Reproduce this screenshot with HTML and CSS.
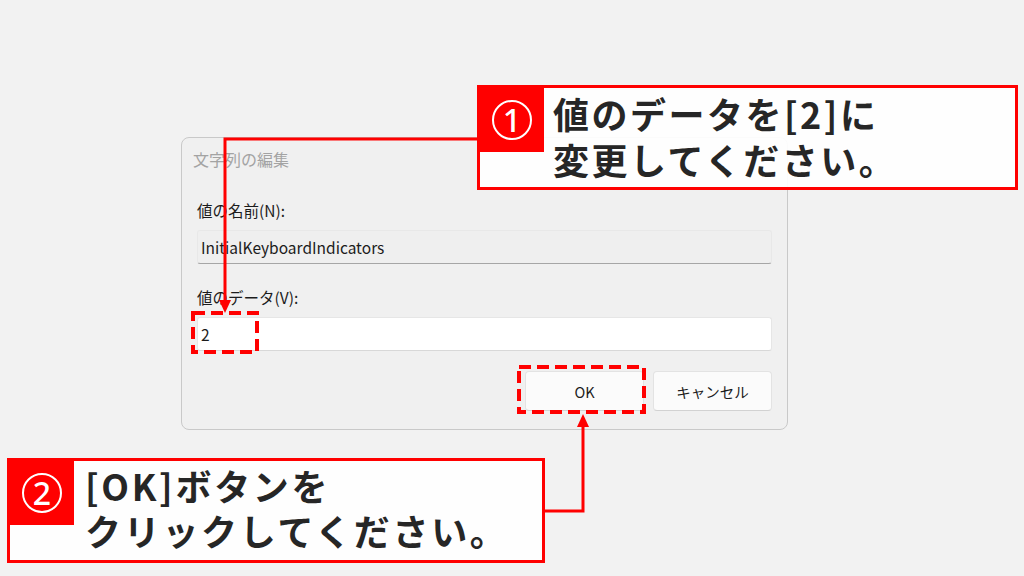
FILE: index.html
```html
<!DOCTYPE html>
<html lang="ja">
  <head>
    <meta charset="utf-8">
    <title>文字列の編集</title>
    <link rel="stylesheet" href="styles.css">
  </head>
  <body>
    <div class="stage">
      <div class="dialog">
        <div class="dialog-title">文字列の編集</div>
        <div class="dialog-body">
          <div class="field-label">値の名前(N):</div>
          <div class="field field-readonly">InitialKeyboardIndicators</div>
          <div class="field-label second">値のデータ(V):</div>
          <div class="field field-edit">2</div>
          <div class="buttons">
            <button class="btn">OK</button>
            <button class="btn">キャンセル</button>
          </div>
        </div>
      </div>

      <svg class="marks" width="1024" height="576" viewBox="0 0 1024 576">
        <!-- dashed highlights -->
        <rect class="dash" x="193" y="313" width="64" height="39"/>
        <rect class="dash" x="519" y="367" width="125" height="45"/>
        <!-- arrow to value field -->
        <polyline class="line" points="480,139 225,139 225,302"/>
        <polygon class="head" points="219,300 231,300 225,313"/>
        <!-- arrow to OK button -->
        <polyline class="line" points="543,511 583,511 583,425"/>
        <polygon class="head" points="577,427 589,427 583,414"/>
      </svg>

      <div class="callout callout-1">
        <div class="num"><span class="circle">1</span></div>
        <div class="callout-text">値のデータを[2]に<br>変更してください。</div>
      </div>

      <div class="callout callout-2">
        <div class="num"><span class="circle">2</span></div>
        <div class="callout-text">[OK]ボタンを<br>クリックしてください。</div>
      </div>
    </div>
  </body>
</html>
```

FILE: styles.css
```css
body {
  margin: 0;
  background: #f2f2f2;
  font-family: "Noto Sans CJK JP", "Noto Sans", sans-serif;
}

.stage {
  position: relative;
  width: 1024px;
  height: 576px;
  overflow: hidden;
  padding: 137px 0 0 181px;
  box-sizing: border-box;
}

/* ダイアログ */
.dialog {
  width: 607px;
  height: 293px;
  box-sizing: border-box;
  background: #f0f0f0;
  border: 1px solid #c9c9c9;
  border-radius: 8px;
}

.dialog-title {
  height: 42px;
  line-height: 42px;
  padding-left: 11px;
  font-size: 16px;
  color: #a3a3a3;
}

.dialog-body {
  padding: 20px 15px 0 15px;
}

.field-label {
  height: 20px;
  line-height: 20px;
  font-size: 15.5px;
  color: #1c1c1c;
}

.field-label.second {
  margin-top: 23px;
}

.field {
  margin-top: 10px;
  height: 34px;
  line-height: 32px;
  box-sizing: border-box;
  padding-left: 3px;
  font-size: 15.5px;
  color: #1c1c1c;
  border-radius: 3px;
}

.field-readonly {
  background: #efefef;
  border: 1px solid #e8e8e8;
  border-bottom-color: #a6a6a6;
}

.field-edit {
  background: #ffffff;
  border: 1px solid #e6e6e6;
  border-bottom-color: #d8d8d8;
}

.buttons {
  margin-top: 20px;
  display: flex;
  justify-content: flex-end;
  gap: 9px;
}

.btn {
  width: 119px;
  height: 40px;
  background: #fbfbfb;
  border: 1px solid #e3e3e3;
  border-bottom-color: #d2d2d2;
  border-radius: 4px;
  font-family: inherit;
  font-size: 14.5px;
  color: #1c1c1c;
}

/* 注釈 */
.marks {
  position: absolute;
  left: 0;
  top: 0;
}

.marks .dash {
  fill: none;
  stroke: #ff0000;
  stroke-width: 4;
  stroke-dasharray: 12 6;
}

.marks .line {
  fill: none;
  stroke: #ff0000;
  stroke-width: 3;
}

.marks .head {
  fill: #ff0000;
}

.callout {
  position: absolute;
  height: 105px;
  box-sizing: border-box;
  border: 3px solid #ff0000;
  background: rgba(255, 255, 255, 0.93);
  display: flex;
  align-items: flex-start;
}

.callout-1 {
  left: 477px;
  top: 85px;
  width: 541px;
}

.callout-2 {
  left: 7px;
  top: 458px;
  width: 538px;
}

.num {
  width: 64px;
  height: 64px;
  flex: none;
  background: #ff0000;
  display: flex;
  align-items: center;
  justify-content: center;
}

.circle {
  width: 40px;
  height: 40px;
  box-sizing: border-box;
  border: 2px solid #ffffff;
  border-radius: 50%;
  color: #ffffff;
  font-family: "Noto Sans", sans-serif;
  font-size: 32px;
  font-weight: 500;
  line-height: 36px;
  text-align: center;
}

.callout-text {
  padding: 2px 0 0 9px;
  font-size: 36px;
  font-weight: 700;
  line-height: 46px;
  letter-spacing: 2.5px;
  color: #262626;
  white-space: nowrap;
}

.callout-2 .callout-text {
  padding: 2px 0 0 11px;
  line-height: 45px;
  letter-spacing: 2.7px;
}
```
